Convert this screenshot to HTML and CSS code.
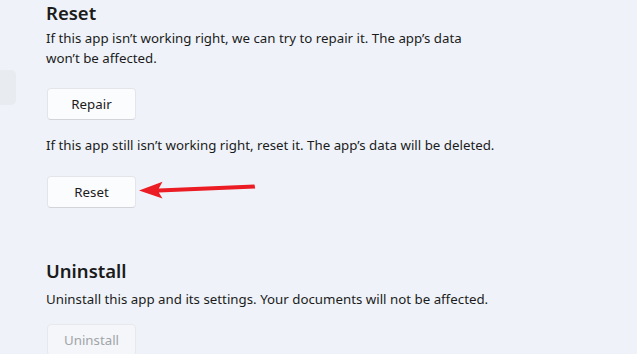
FILE: index.html
```html
<!DOCTYPE html>
<html lang="en">
<head>
<meta charset="utf-8">
<title>App settings – Reset</title>
<link rel="stylesheet" href="styles.css">
</head>
<body>
<div class="page">
  <nav class="nav">
    <div class="nav-item"></div>
  </nav>
  <main class="content">
    <section class="group">
      <h2 class="group-title group-title-top">Reset</h2>
      <p class="desc">If this app isn’t working right, we can try to repair it. The app’s data<br>won’t be affected.</p>
      <button class="btn btn-repair" type="button">Repair</button>
      <p class="desc desc-second">If this app still isn’t working right, reset it. The app’s data will be deleted.</p>
      <div class="btn-row">
        <button class="btn btn-reset" type="button">Reset</button>
        <svg class="arrow" width="122" height="24" viewBox="0 0 122 24" aria-hidden="true">
          <polygon points="2,12.5 25.5,3.8 21.8,10.6 117.5,6.6 118.2,10.6 21.8,14.6 25.5,20.6" fill="#ec1c24"/>
        </svg>
      </div>
    </section>
    <section class="group">
      <h2 class="group-title">Uninstall</h2>
      <p class="desc">Uninstall this app and its settings. Your documents will not be affected.</p>
      <button class="btn btn-uninstall" type="button" disabled>Uninstall</button>
    </section>
  </main>
</div>
</body>
</html>
```

FILE: styles.css
```css
html, body {
  margin: 0;
  padding: 0;
  height: 100%;
  background: #eff3f9;
  overflow: hidden;
}

body {
  font-family: "Noto Sans", "Open Sans", sans-serif;
  color: #1b1b1b;
}

.page {
  display: flex;
  width: 637px;
  height: 354px;
}

.nav {
  width: 16px;
  flex: none;
  padding-top: 70px;
}

.nav-item {
  height: 35px;
  background: #e8ebf0;
  border-radius: 0 5px 5px 0;
}

.content {
  flex: 1;
  padding: 3px 0 0 30px;
}

.group-title {
  margin: 0 0 8px;
  font-size: 18.5px;
  line-height: 20px;
  font-weight: 600;
}

.group-title-top {
  margin-bottom: 5px;
}

.group + .group {
  margin-top: 53px;
}

.desc {
  margin: 0;
  font-size: 13.3px;
  line-height: 20px;
}

.desc-second {
  margin-top: 15px;
}

.btn {
  display: block;
  width: 89px;
  height: 32px;
  margin: 20px 0 0 1px;
  padding: 0;
  font-family: inherit;
  font-size: 13.3px;
  color: #1b1b1b;
  background: #fbfcfe;
  border: 1px solid #e3e5ea;
  border-bottom-color: #d2d4d9;
  border-radius: 4px;
}

.btn-row {
  position: relative;
  margin-top: 21px;
}

.btn-row .btn {
  margin-top: 0;
}

.arrow {
  position: absolute;
  left: 91px;
  top: 2px;
}

.btn-uninstall {
  margin-top: 15px;
  color: #a2a4a8;
  background: #f4f6fa;
  border-color: #e6e8ec;
}
```
